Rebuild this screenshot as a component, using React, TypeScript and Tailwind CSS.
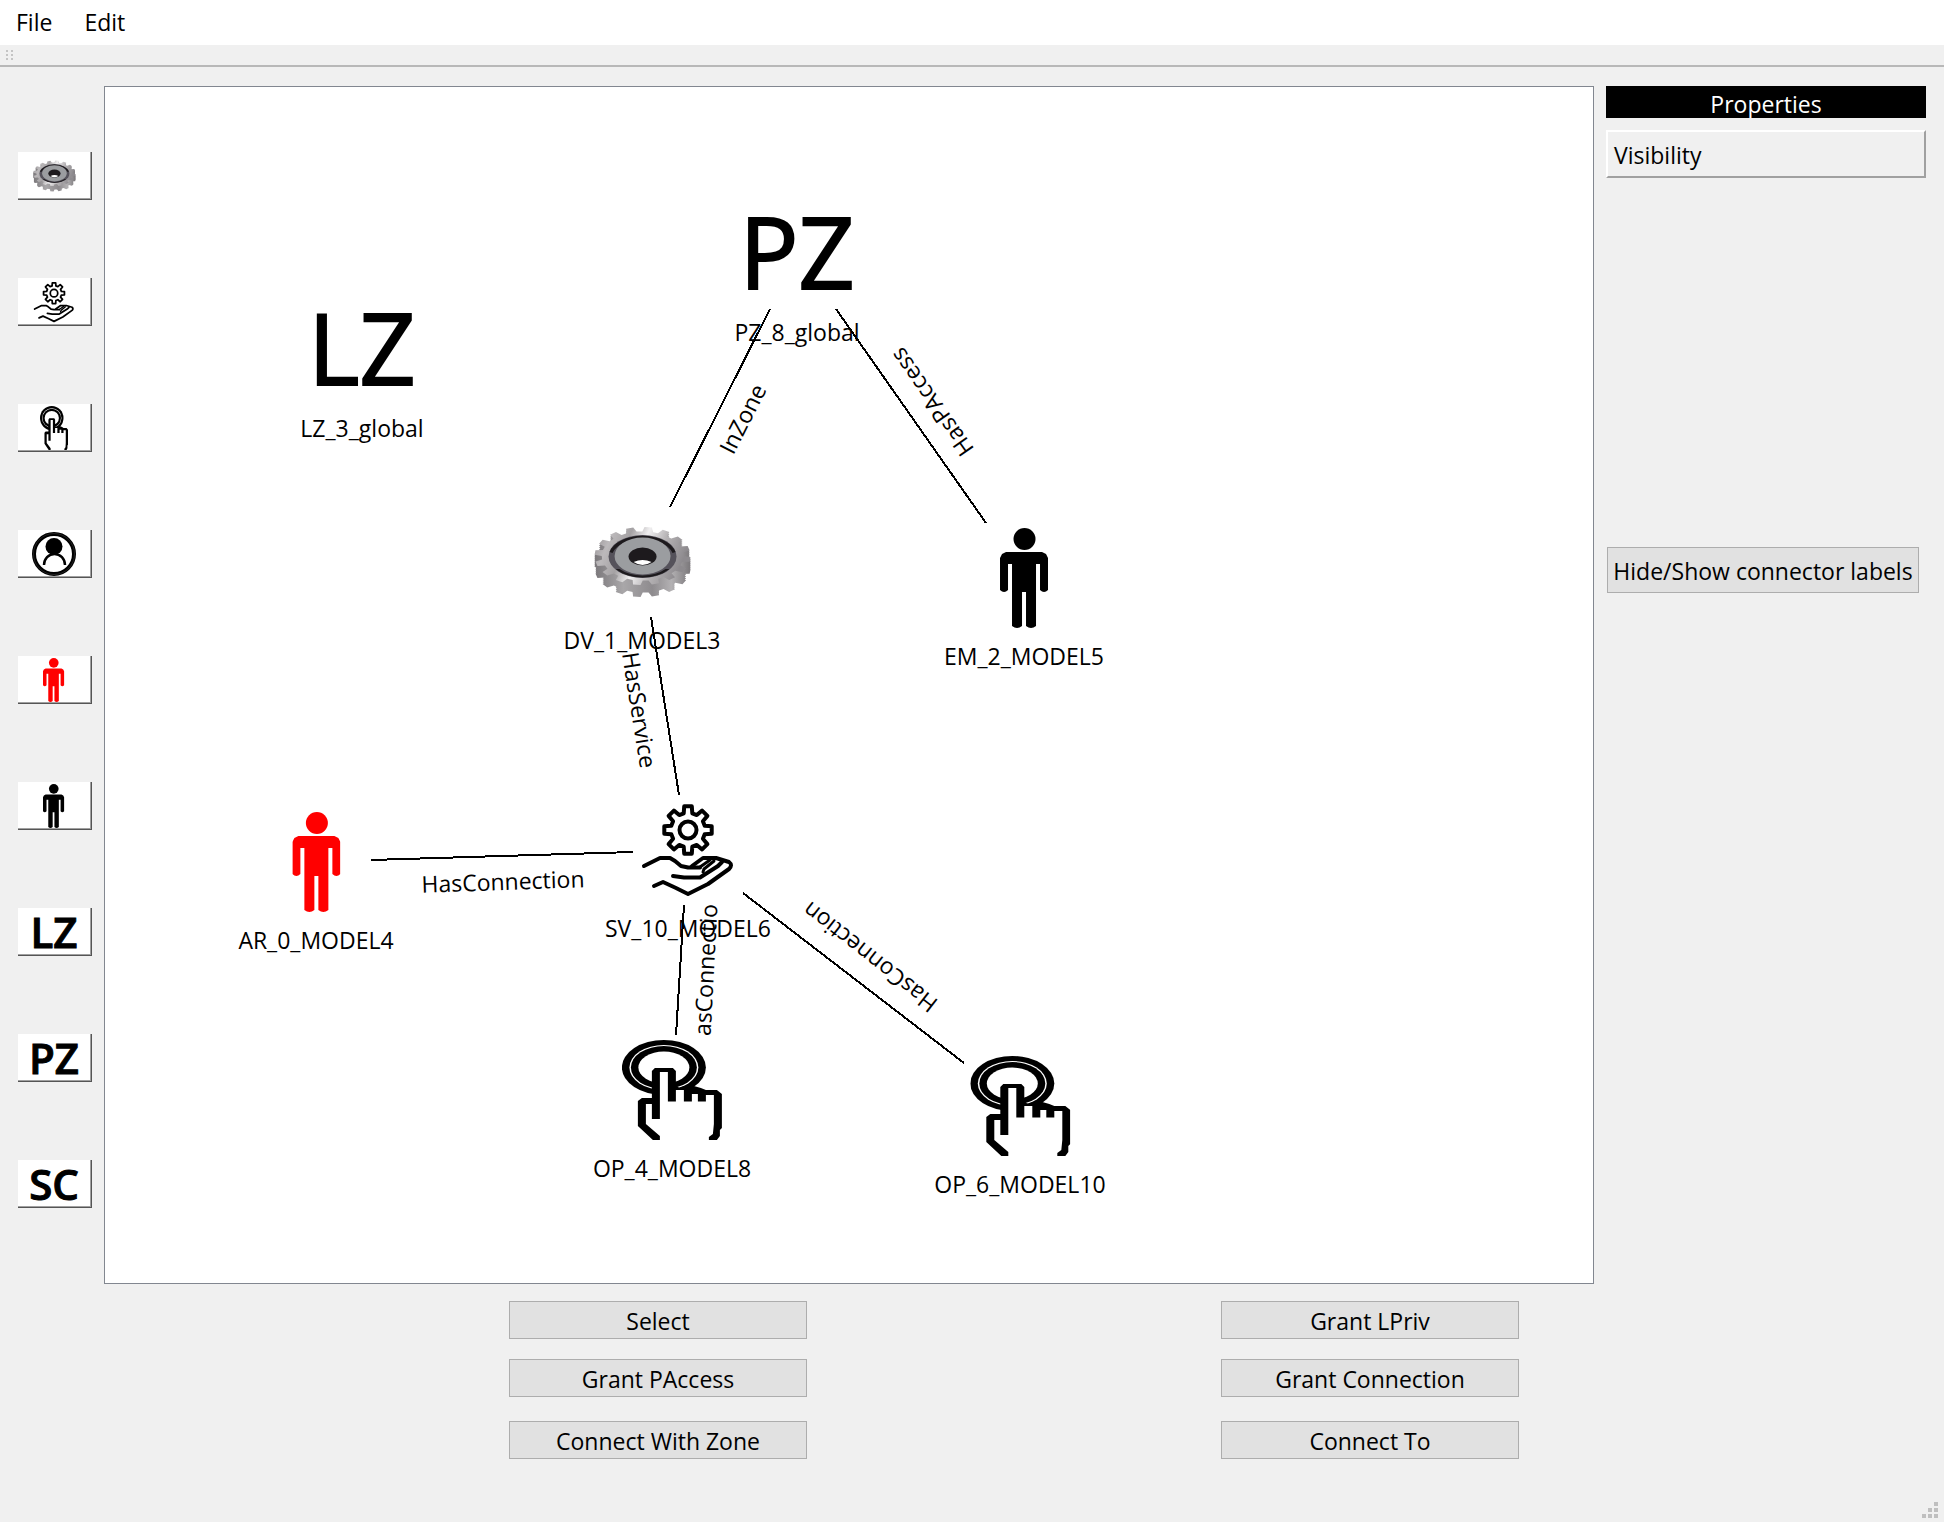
import type { ReactNode } from "react";

/* ---------- drawings ---------- */

function gearPath(
  cx: number,
  cy: number,
  rx: number,
  ry: number,
  depth: number,
  teeth: number,
  start = 0,
) {
  const step = (Math.PI * 2) / teeth;
  const points: string[] = [];
  for (let i = 0; i < teeth; i++) {
    const mid = start + i * step;
    const corners: [number, number][] = [
      [mid - step * 0.32, 1 - depth],
      [mid - step * 0.2, 1],
      [mid + step * 0.2, 1],
      [mid + step * 0.32, 1 - depth],
    ];
    for (const [a, r] of corners) {
      points.push(
        `${(cx + Math.cos(a) * rx * r).toFixed(1)} ${(cy + Math.sin(a) * ry * r).toFixed(1)}`,
      );
    }
  }
  return `M${points.join("L")}Z`;
}

function DeviceIcon({ className, id }: { className: string; id: string }) {
  const layers = [12, 10, 8, 6, 4, 2];
  return (
    <svg viewBox="0 0 100 100" className={className} aria-hidden="true">
      <defs>
        <linearGradient id={`${id}-face`} x1="0" y1="0" x2="1" y2="0.25">
          <stop offset="0" stopColor="#8f8b8e" />
          <stop offset="0.2" stopColor="#bcb9bb" />
          <stop offset="0.38" stopColor="#a5a2a4" />
          <stop offset="0.55" stopColor="#f0eff0" />
          <stop offset="0.75" stopColor="#b5b2b4" />
          <stop offset="1" stopColor="#8d8a8e" />
        </linearGradient>
        <linearGradient id={`${id}-side`} x1="0" y1="0" x2="1" y2="0">
          <stop offset="0" stopColor="#7a777a" />
          <stop offset="0.3" stopColor="#a9a7a9" />
          <stop offset="0.6" stopColor="#8e8b8e" />
          <stop offset="0.8" stopColor="#b3b1b3" />
          <stop offset="1" stopColor="#7a777a" />
        </linearGradient>
      </defs>
      {layers.map((dy) => (
        <path
          key={dy}
          d={gearPath(51, 44 + dy, 48, 29, 0.15, 16, 0.12)}
          fill={`url(#${id}-side)`}
        />
      ))}
      <path d={gearPath(51, 44, 48, 29, 0.15, 16, 0.12)} fill={`url(#${id}-face)`} />
      <ellipse cx="51" cy="44.5" rx="34" ry="21.5" fill="#55525b" />
      <path d="M18 40A34 21.5 0 0 1 84 40L81 41A31 18.5 0 0 0 21 41Z" fill="#1d1a1d" />
      <path d="M24 57A34 21.5 0 0 0 78 57L74 57A30 18 0 0 1 28 57Z" fill="#1d1a1d" />
      <ellipse cx="51" cy="44" rx="28" ry="18.5" fill="#9b9da0" />
      <ellipse cx="51" cy="44.5" rx="14" ry="9" fill="#1d1a1d" />
      <path d="M42 50Q51 46 60 50Q51 56 42 50Z" fill="#ffffff" />
    </svg>
  );
}

function ServiceIcon({ className }: { className: string }) {
  return (
    <svg
      viewBox="0 0 100 100"
      className={className}
      fill="none"
      stroke="#000"
      strokeWidth="4"
      strokeLinejoin="round"
      strokeLinecap="round"
      aria-hidden="true"
    >
      <path d={gearPath(50, 30, 24, 24, 0.28, 8, Math.PI / 2)} />
      <circle cx="50" cy="30" r="8.5" />
      <path d="M6 66L14 62L22 58H32L37 61L43 66L50 67.5H62" />
      <path d="M54 66L65 58H78L91 62Q95 65 91 69L70 84L50 94L38 88L25 82L16 86" />
      <path d="M35 76L46 77.5H62L80 66L84 62" />
      <path d="M65 72L66 69L76 61" strokeWidth="3" />
      <path d="M62 67L72 60" strokeWidth="3" />
    </svg>
  );
}

function OperationIcon({ className }: { className: string }) {
  return (
    <svg
      viewBox="0 0 100 100"
      preserveAspectRatio="none"
      className={className}
      aria-hidden="true"
    >
      <ellipse cx="42" cy="27.5" rx="42" ry="27.5" />
      <ellipse cx="42" cy="27.5" rx="34.5" ry="22.5" fill="#fff" />
      <ellipse cx="42" cy="27.5" rx="33" ry="21.5" />
      <ellipse cx="42" cy="27.5" rx="25.5" ry="16" fill="#fff" />
      <path
        d="M34 33H50V50H72L84 54H94L96 60V86L90 100H36L20 84V61H34Z"
        fill="#fff"
      />
      <path d="M30 31L33 28H51L54 31V46L58 48L62 46H72L79 48L84 50H95L100 54V88L98 90V96L95 100H87V97L91 94L92 84V55H84V61.5H76V54H70V61.5H62V50H54V61.5H46V32H38V79H30V64H24V84L38 96V100H31L16 86V61L20 58H30Z" />
    </svg>
  );
}

function UserIcon({ className }: { className: string }) {
  return (
    <svg viewBox="0 0 44 44" className={className} fill="none" aria-hidden="true">
      <circle cx="22" cy="22" r="20" stroke="#000" strokeWidth="4" />
      <circle cx="22" cy="22" r="20.5" stroke="#444" strokeWidth="0.5" />
      <circle cx="22" cy="14.5" r="8.5" fill="#000" />
      <path d="M12 33A10 10.5 0 0 1 33 33" stroke="#000" strokeWidth="2.5" />
    </svg>
  );
}

function PersonIcon({ className }: { className: string }) {
  return (
    <svg
      viewBox="0 0 48 100"
      className={className}
      fill="currentColor"
      aria-hidden="true"
    >
      <circle cx="24.5" cy="11" r="11" />
      <path d="M6 24H42L46 26L48 30V62Q44 66 40 62V36H36V98Q31 102 26 98V64H22V98Q17 102 12 98V36H8V62Q4 66 0 62V30L2 26Z" />
    </svg>
  );
}

/* ---------- left palette ---------- */

function PaletteLetters({ children }: { children: ReactNode }) {
  return (
    <span className="text-[42px] leading-[44px] font-semibold [-webkit-text-stroke:1px_black]">
      {children}
    </span>
  );
}

const palette: { name: string; icon: ReactNode }[] = [
  { name: "Device", icon: <DeviceIcon id="palette-gear" className="size-11" /> },
  { name: "Service", icon: <ServiceIcon className="size-11" /> },
  { name: "Operation", icon: <OperationIcon className="h-11 w-7" /> },
  { name: "User", icon: <UserIcon className="size-11" /> },
  { name: "Actor", icon: <PersonIcon className="h-11 text-[#ff0000]" /> },
  { name: "Employee", icon: <PersonIcon className="h-11" /> },
  { name: "Logical zone", icon: <PaletteLetters>LZ</PaletteLetters> },
  { name: "Physical zone", icon: <PaletteLetters>PZ</PaletteLetters> },
  { name: "Scenario", icon: <PaletteLetters>SC</PaletteLetters> },
];

/* ---------- diagram ---------- */

function ZoneLetters({ children }: { children: ReactNode }) {
  return (
    <span className="self-start text-[98px] leading-[94px] [-webkit-text-stroke:2px_black]">
      {children}
    </span>
  );
}

const nodes: { label: string; x: number; y: number; icon: ReactNode }[] = [
  { label: "LZ_3_global", x: 257, y: 213, icon: <ZoneLetters>LZ</ZoneLetters> },
  { label: "PZ_8_global", x: 692, y: 117, icon: <ZoneLetters>PZ</ZoneLetters> },
  {
    label: "DV_1_MODEL3",
    x: 537,
    y: 425,
    icon: <DeviceIcon id="node-gear" className="size-[100px]" />,
  },
  {
    label: "EM_2_MODEL5",
    x: 919,
    y: 441,
    icon: <PersonIcon className="h-[100px]" />,
  },
  {
    label: "AR_0_MODEL4",
    x: 211,
    y: 725,
    icon: <PersonIcon className="h-[100px] text-[#ff0000]" />,
  },
  {
    label: "SV_10_MODEL6",
    x: 583,
    y: 713,
    icon: <ServiceIcon className="size-[100px]" />,
  },
  {
    label: "OP_4_MODEL8",
    x: 567,
    y: 953,
    icon: <OperationIcon className="size-[100px]" />,
  },
  {
    label: "OP_6_MODEL10",
    x: 915,
    y: 969,
    icon: <OperationIcon className="size-[100px]" />,
  },
];

const connectors = [
  { label: "InZone", from: [665, 222], to: [565, 420], at: [638, 332], angle: -63 },
  { label: "HasPAccess", from: [731, 222], to: [881, 436], at: [827, 315], angle: 235 },
  { label: "HasService", from: [546, 530], to: [574, 708], at: [534, 623], angle: 81 },
  { label: "HasConnection", from: [266, 773], to: [528, 765], at: [398, 795], angle: -2 },
  { label: "asConnectio", from: [579, 818], to: [571, 948], at: [601, 883], angle: -87 },
  { label: "HasConnection", from: [638, 806], to: [859, 976], at: [765, 870], angle: 218 },
];

function Diagram() {
  return (
    <section
      aria-label="Diagram"
      className="relative flex-1 overflow-hidden border border-[#828790] bg-white"
    >
      {nodes.map((node) => (
        <div
          key={node.label}
          className="absolute flex -translate-x-1/2 flex-col items-center gap-3"
          style={{ left: node.x, top: node.y }}
        >
          <div className="flex h-[100px] items-center">{node.icon}</div>
          <span className="leading-8 whitespace-nowrap">{node.label}</span>
        </div>
      ))}
      <svg className="absolute inset-0 size-full">
        {connectors.map((c) => (
          <g key={c.from.join()}>
            <line
              x1={c.from[0]}
              y1={c.from[1]}
              x2={c.to[0]}
              y2={c.to[1]}
              stroke="#000"
              strokeWidth="2"
              shapeRendering="crispEdges"
            />
            <text
              transform={`translate(${c.at[0]} ${c.at[1]}) rotate(${c.angle})`}
              y="8"
              textAnchor="middle"
            >
              {c.label}
            </text>
          </g>
        ))}
      </svg>
    </section>
  );
}

/* ---------- bottom actions ---------- */

function ActionButton({ children }: { children: ReactNode }) {
  return (
    <button
      type="button"
      className="flex h-[38px] w-[298px] items-center justify-center border border-[#adadad] bg-[#e1e1e1] pt-0.5"
    >
      {children}
    </button>
  );
}

const gripCells = [0, 0, 1, 0, 1, 1, 1, 1, 1];

export default function App() {
  return (
    <div className="flex min-h-screen flex-col bg-[#f0f0f0] font-['Open_Sans','Noto_Sans',sans-serif] text-[23px] text-black">
      <nav aria-label="Menu" className="flex h-[45px] items-center gap-8 bg-white px-4">
        <button type="button">File</button>
        <button type="button">Edit</button>
      </nav>

      <div className="flex h-[22px] items-center border-b-2 border-[#b8b8b8] px-1.5">
        <div className="grid grid-cols-2 gap-x-[3px] gap-y-0.5">
          {[0, 1, 2, 3, 4, 5].map((i) => (
            <span key={i} className="size-0.5 bg-[#c4c4c4]" />
          ))}
        </div>
      </div>

      <main className="flex flex-1 pt-[19px] pr-[18px]">
        <div
          role="toolbar"
          aria-label="Palette"
          className="flex w-[104px] flex-col gap-[78px] pt-[66px] pl-[18px]"
        >
          {palette.map((item) => (
            <button
              key={item.name}
              type="button"
              aria-label={item.name}
              className="flex h-12 w-[74px] items-center justify-center border-r border-b border-[#555555] bg-white pt-0.5 pr-px pb-px shadow-[inset_-1px_-1px_0_#a0a0a0]"
            >
              {item.icon}
            </button>
          ))}
        </div>

        <Diagram />

        <aside className="ml-3 flex w-80 flex-col">
          <h2 className="h-8 overflow-hidden bg-black text-center leading-9 text-white">
            Properties
          </h2>
          <button
            type="button"
            className="mt-3 h-12 border-2 border-t-white border-r-[#a0a0a0] border-b-[#a0a0a0] border-l-white px-1.5 pt-0.5 text-left"
          >
            Visibility
          </button>
          <button
            type="button"
            className="mt-[369px] ml-px h-[46px] w-[312px] border border-[#adadad] bg-[#e1e1e1] pt-0.5 whitespace-nowrap"
          >
            Hide/Show connector labels
          </button>
        </aside>
      </main>

      <footer className="flex items-end pt-[17px] pr-1.5 pb-1">
        <div className="flex flex-1 justify-between pb-[59px] pl-[509px]">
          {[
            ["Select", "Grant PAccess", "Connect With Zone"],
            ["Grant LPriv", "Grant Connection", "Connect To"],
          ].map(([first, second, third]) => (
            <div key={first} className="flex flex-col">
              <ActionButton>{first}</ActionButton>
              <div className="mt-5 mb-6">
                <ActionButton>{second}</ActionButton>
              </div>
              <ActionButton>{third}</ActionButton>
            </div>
          ))}
        </div>
        <div className="flex w-[419px] justify-end">
          <div className="grid grid-cols-3 gap-0.5" aria-hidden="true">
            {gripCells.map((on, i) => (
              <span key={i} className={on ? "size-1 bg-[#bfbfbf]" : "size-1"} />
            ))}
          </div>
        </div>
      </footer>
    </div>
  );
}
